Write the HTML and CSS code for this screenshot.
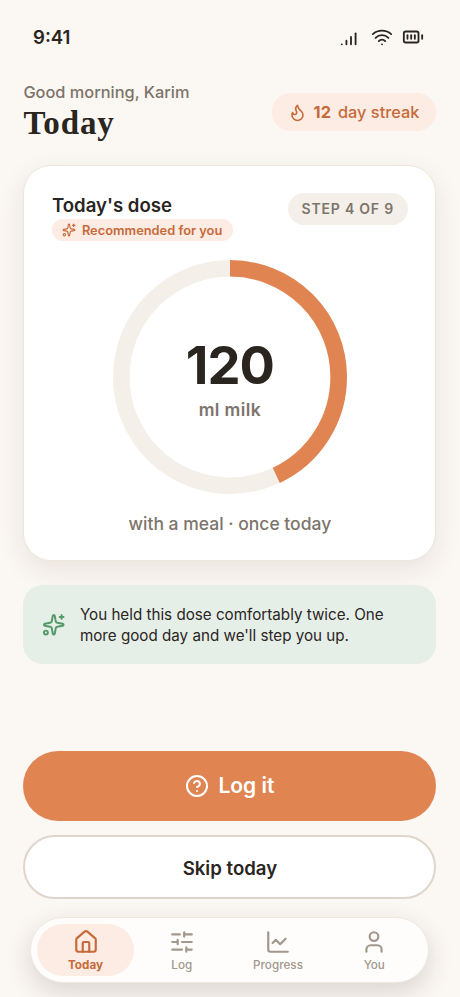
FILE: index.html
```html
<!DOCTYPE html>
<html lang="en">
<head>
<meta charset="utf-8">
<meta name="viewport" content="width=device-width, initial-scale=1">
<title>Today</title>
<link rel="stylesheet" href="styles.css">
</head>
<body>
<svg class="sprite" aria-hidden="true">
  <symbol id="sparkles" viewBox="0 0 24 24"><path d="M11.017 2.814a1 1 0 0 1 1.966 0l1.051 5.558a2 2 0 0 0 1.594 1.594l5.558 1.051a1 1 0 0 1 0 1.966l-5.558 1.051a2 2 0 0 0-1.594 1.594l-1.051 5.558a1 1 0 0 1-1.966 0l-1.051-5.558a2 2 0 0 0-1.594-1.594l-5.558-1.051a1 1 0 0 1 0-1.966l5.558-1.051a2 2 0 0 0 1.594-1.594z"/><path d="M20 2v4"/><path d="M22 4h-4"/><circle cx="4" cy="20" r="2"/></symbol>
</svg>
<div class="screen">
  <div class="status">
    <span class="time">9:41</span>
    <div class="status-icons">
      <svg class="icon status-icon" viewBox="0 0 24 24"><path d="M2 20h.01"/><path d="M7 20v-4"/><path d="M12 20v-8"/><path d="M17 20V8"/></svg>
      <svg class="icon status-icon" viewBox="0 0 24 24"><path d="M12 20h.01"/><path d="M2 8.82a15 15 0 0 1 20 0"/><path d="M5 12.859a10 10 0 0 1 14 0"/><path d="M8.5 16.429a5 5 0 0 1 7 0"/></svg>
      <svg class="icon status-icon" viewBox="0 0 24 24"><path d="M10 10v4"/><path d="M14 10v4"/><path d="M22 14v-4"/><path d="M6 10v4"/><rect x="2" y="6" width="16" height="12" rx="2"/></svg>
    </div>
  </div>

  <header class="header">
    <div>
      <p class="greeting">Good morning, Karim</p>
      <h1 class="title">Today</h1>
    </div>
    <div class="streak">
      <svg class="icon flame" viewBox="0 0 24 24"><path d="M8.5 14.5A2.5 2.5 0 0 0 11 12c0-1.38-.5-2-1-3-1.072-2.143-.224-4.054 2-6 .5 2.5 2 4.9 4 6.5 2 1.6 3 3.5 3 5.5a7 7 0 1 1-14 0c0-1.153.433-2.294 1-3a2.5 2.5 0 0 0 2.5 2.5z"/></svg>
      <b class="streak-count">12</b>
      <span>day streak</span>
    </div>
  </header>

  <section class="card">
    <div class="card-head">
      <div>
        <h2 class="card-title">Today's dose</h2>
        <div class="badge"><svg class="icon badge-icon"><use href="#sparkles"/></svg><span>Recommended for you</span></div>
      </div>
      <span class="step">STEP 4 OF 9</span>
    </div>
    <div class="ring">
      <svg class="ring-art" viewBox="0 0 234 234"><circle class="track" cx="117" cy="117" r="108.7"/><circle class="progress" cx="117" cy="117" r="108.7" pathLength="1000" stroke-dasharray="430 1000" transform="rotate(-90 117 117)"/></svg>
      <div class="ring-label">
        <span class="amount">120</span>
        <span class="unit">ml milk</span>
      </div>
    </div>
    <p class="note">with a meal · once today</p>
  </section>

  <section class="tip">
    <svg class="icon tip-icon"><use href="#sparkles"/></svg>
    <p class="tip-text">You held this dose comfortably twice. One<br>more good day and we'll step you up.</p>
  </section>

  <div class="actions">
    <button class="btn primary"><svg class="icon help" viewBox="0 0 24 24"><circle cx="12" cy="12" r="10"/><path d="M9.09 9a3 3 0 0 1 5.83 1c0 2-3 3-3 3"/><path d="M12 17h.01"/></svg><span>Log it</span></button>
    <button class="btn secondary">Skip today</button>
  </div>

  <nav class="tabs">
    <a class="tab active"><svg class="icon tab-icon" viewBox="0 0 24 24"><path d="M15 21v-8a1 1 0 0 0-1-1h-4a1 1 0 0 0-1 1v8"/><path d="M3 10a2 2 0 0 1 .709-1.528l7-6a2 2 0 0 1 2.582 0l7 6A2 2 0 0 1 21 10v9a2 2 0 0 1-2 2H5a2 2 0 0 1-2-2z"/></svg><span>Today</span></a>
    <a class="tab"><svg class="icon tab-icon" viewBox="0 0 24 24"><path d="M10 5H3"/><path d="M12 19H3"/><path d="M14 3v4"/><path d="M16 17v4"/><path d="M21 12h-9"/><path d="M21 19h-5"/><path d="M21 5h-7"/><path d="M8 10v4"/><path d="M8 12H3"/></svg><span>Log</span></a>
    <a class="tab"><svg class="icon tab-icon" viewBox="0 0 24 24"><path d="M3 3v16a2 2 0 0 0 2 2h16"/><path d="m19 9-5 5-4-4-3 3"/></svg><span>Progress</span></a>
    <a class="tab"><svg class="icon tab-icon" viewBox="0 0 24 24"><path d="M19 21v-2a4 4 0 0 0-4-4H9a4 4 0 0 0-4 4v2"/><circle cx="12" cy="7" r="4"/></svg><span>You</span></a>
  </nav>
</div>
</body>
</html>
```
FILE: styles.css
```css
* { box-sizing: border-box; }
body {
  margin: 0;
  background: #fbf7f2;
  color: #2a251f;
  font-family: Inter, "Liberation Sans", sans-serif;
}
h1, h2, p { margin: 0; }
.sprite { position: absolute; width: 0; height: 0; }
.icon {
  display: block;
  flex: none;
  fill: none;
  stroke: currentColor;
  stroke-width: 2;
  stroke-linecap: round;
  stroke-linejoin: round;
}
.screen {
  display: flex;
  flex-direction: column;
  height: 997px;
  padding: 0 23.6px 0 23.4px;
  overflow: hidden;
}
.status {
  display: flex;
  justify-content: space-between;
  align-items: center;
  height: 30px;
  margin-top: 22px;
  padding: 0 12.4px 0 9.6px;
}
.time { font-size: 18.6px; font-weight: 600; line-height: 30px; }
.status-icons { display: flex; align-items: center; gap: 9px; margin-bottom: 1px; }
.status-icon { width: 22px; height: 22px; }
.header {
  display: flex;
  justify-content: space-between;
  margin-top: 29px;
  height: 84px;
}
.greeting { font-size: 16.35px; font-weight: 500; line-height: 23px; color: #7d746b; }
.title {
  font-family: "Liberation Serif", serif;
  font-size: 33px;
  font-weight: 700;
  line-height: 38px;
  letter-spacing: 0.9px;
}
.streak {
  display: flex;
  align-items: center;
  gap: 7px;
  height: 38px;
  margin-top: 12px;
  padding: 0 17px 0 16px;
  border-radius: 19px;
  background: #fcece3;
  color: #c76a3a;
  font-size: 16.35px;
  font-weight: 500;
}
.flame { width: 19px; height: 19px; }
.streak-count { font-weight: 700; }
.card {
  height: 396px;
  padding: 27px 27.5px 0;
  border: 1px solid #eee6dc;
  border-radius: 28px;
  background: #fff;
  box-shadow: 0 9px 28px rgba(42, 37, 31, 0.09);
}
.card-head { display: flex; justify-content: space-between; }
.card-title { height: 26px; font-size: 18.6px; font-weight: 600; line-height: 24px; }
.badge {
  display: flex;
  align-items: center;
  gap: 6px;
  height: 22px;
  padding: 0 11px 0 10px;
  border-radius: 11px;
  background: #fcece3;
  color: #c76a3a;
  font-size: 12.85px;
  font-weight: 600;
}
.badge-icon { width: 14px; height: 14px; }
.step {
  height: 32px;
  padding: 0 14px;
  border-radius: 16px;
  background: #f4efe9;
  color: #7d746b;
  font-size: 14px;
  font-weight: 600;
  letter-spacing: 0.78px;
  line-height: 32px;
}
.ring { display: grid; width: 234px; height: 234px; margin: 18.5px auto 0; }
.ring-art, .ring-label { grid-area: 1 / 1; }
.ring-art { display: block; width: 234px; height: 234px; fill: none; stroke-width: 16.6; }
.track { stroke: #f4efe9; }
.progress { stroke: #e08552; }
.ring-label { display: flex; flex-direction: column; align-items: center; padding-top: 76.5px; }
.amount { font-size: 52.5px; font-weight: 700; line-height: 58px; letter-spacing: -1px; }
.unit { margin-top: 4.5px; font-size: 17.5px; font-weight: 600; line-height: 22px; letter-spacing: 0.4px; color: #7d746b; }
.note { margin-top: 18px; font-size: 17.5px; font-weight: 500; line-height: 24px; color: #7d746b; text-align: center; }
.tip {
  display: flex;
  align-items: center;
  gap: 14.5px;
  height: 79px;
  margin-top: 24px;
  padding: 0 18.5px;
  border-radius: 20px;
  background: #e6efe7;
}
.tip-icon { width: 23.5px; height: 23.5px; color: #559a6b; }
.tip-text { font-size: 15.2px; line-height: 21px; white-space: nowrap; }
.actions { display: flex; flex-direction: column; gap: 14px; margin-top: 87px; }
.btn {
  display: flex;
  align-items: center;
  justify-content: center;
  border: 0;
  padding: 0;
  font-family: inherit;
  font-weight: 600;
}
.primary { gap: 9px; height: 70px; padding-bottom: 1px; border-radius: 35px; background: #e08552; color: #fff; font-size: 21px; }
.help { width: 24px; height: 24px; }
.secondary { height: 64px; padding-top: 2px; border: 2px solid #dfd5ca; border-radius: 32px; background: #fff; color: #2a251f; font-size: 18.6px; }
.tabs {
  display: flex;
  height: 66px;
  margin: 18px 7px 0;
  padding: 6px;
  border: 1px solid #f0e8df;
  border-radius: 33px;
  background: #fffdfb;
  box-shadow: 0 9px 26px rgba(42, 37, 31, 0.16);
}
.tab {
  display: flex;
  flex: 1;
  flex-direction: column;
  align-items: center;
  gap: 3px;
  padding-top: 5px;
  border-radius: 26px;
  color: #a1978c;
  font-size: 11.7px;
  font-weight: 500;
  line-height: 14px;
}
.tab-icon { width: 26px; height: 26px; }
.active { background: #fcece3; color: #c76a3a; font-weight: 700; }
```
